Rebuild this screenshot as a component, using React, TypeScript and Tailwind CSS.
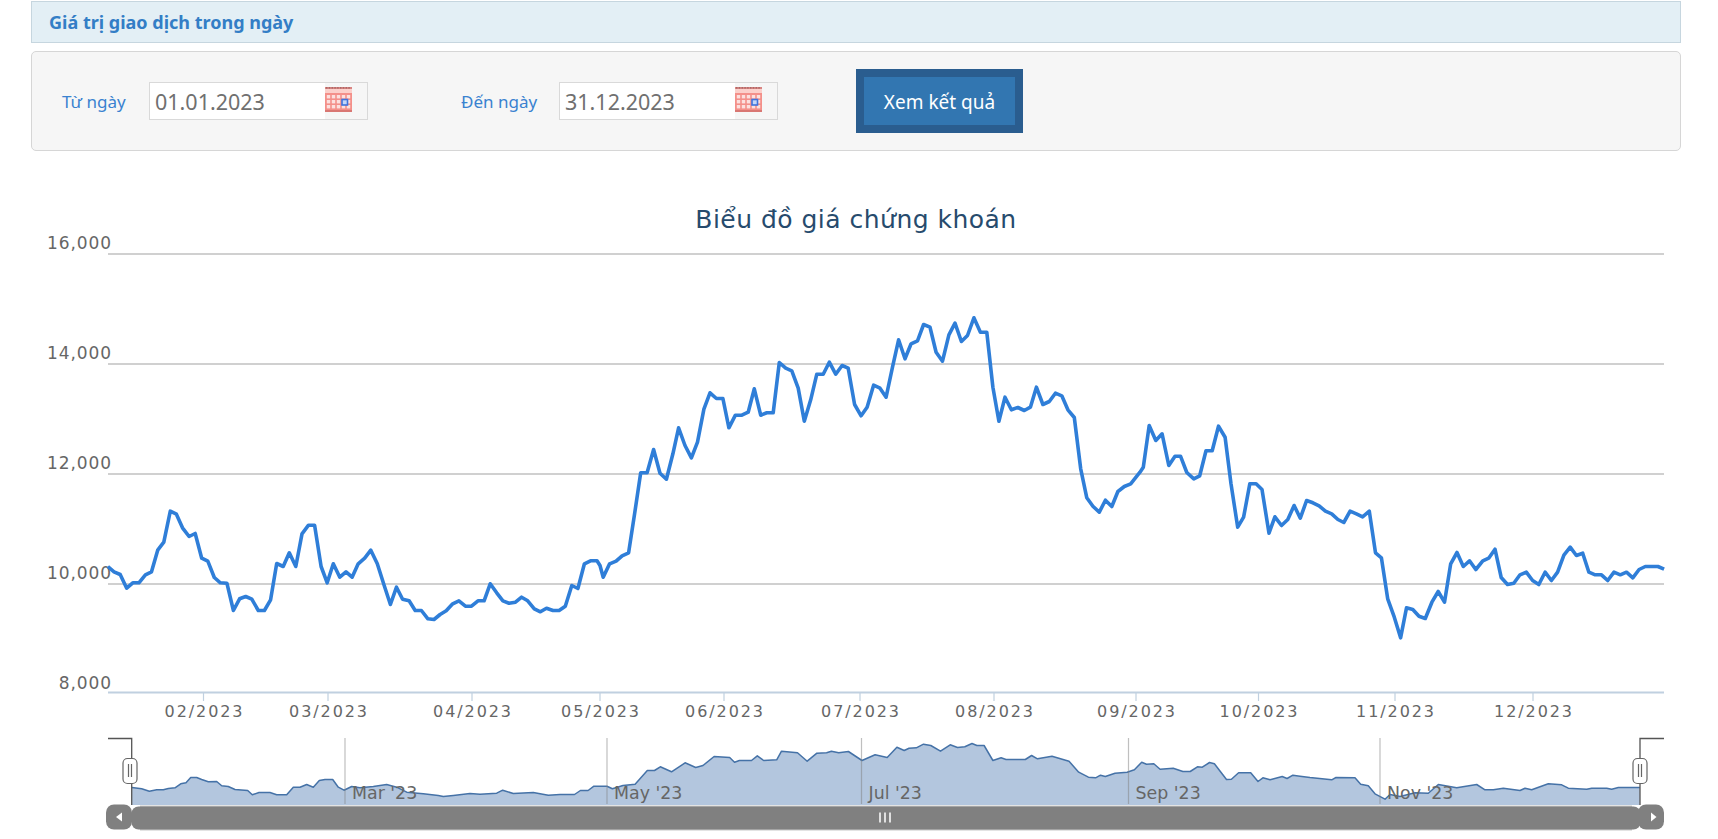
const mainA = [282,378,298,394,314,402,331,443,347,427,363,427,380,403,396,394,412,329,428,305,445,212,461,221,477,262,494,288,510,279,527,353,543,362,560,411,576,427,593,428,610,510,626,475,642,468,658,476,675,510,691,510,707,478,723,369,740,378,756,337,773,378,789,280,806,254,822,254,839,378,855,427,871,370,888,410,904,394,920,410,936,370,953,353,969,329,986,370,1004,435,1020,492,1036,440,1052,476,1069,481,1085,510,1101,510,1118,535,1134,537,1150,522,1166,511,1183,490,1199,481,1216,497,1232,497,1249,481,1265,481,1281,430,1298,457,1314,481,1330,488,1347,485,1363,470,1379,481,1396,505,1412,514,1428,503,1445,510,1461,510,1477,497,1494,435,1510,444,1527,370,1543,361,1560,361];
const mainB = [0,855,9,890,27,850,45,842,62,826,80,817,97,700,114,577,132,577,150,507,168,578,186,596,204,520,220,442,238,495,256,532,273,485,291,386,308,337,326,354,344,354,361,442,379,404,397,404,415,395,432,325,450,404,467,397,485,397,502,246,520,263,537,271,555,323,572,422,590,358,607,281,625,281,642,245,660,281,678,255,695,263,713,372,731,406,748,380,766,314,784,323,801,350,819,260,836,178,854,235,871,190,889,181,906,132,924,140,941,215,959,242,977,163,994,128,1012,183,1029,165,1047,112,1065,155,1083,155,1100,320,1117,422,1134,350,1152,388,1170,381,1188,390,1205,380,1222,320,1240,372,1258,363,1275,338,1293,346,1310,388,1328,411,1346,565,1363,652,1380,677,1398,695,1415,659,1433,678,1450,633,1468,618,1486,610,1503,587];
const mainC = [0,215,9,200,25,75,43,120,60,100,78,195,95,167,110,167,127,216,146,235,162,226,179,151,196,151,213,77,231,110,247,250,265,380,281,350,298,250,315,250,331,267,350,398,366,349,384,375,401,357,418,315,435,353,452,300,469,307,486,316,503,332,520,340,537,357,553,366,570,332,587,340,604,349,622,332,639,457,655,472,672,595,690,650,707,712,723,622,740,627,757,647,774,654,792,605,809,573,826,605,843,490,860,456,877,498,894,481,911,507,930,481,946,473,963,446,980,531,997,552,1014,548,1031,523,1048,515,1065,540,1082,552,1099,515,1116,540,1133,515,1150,464,1167,440,1184,465,1201,458,1218,515,1235,523,1252,523,1269,540,1286,515,1303,523,1320,515,1337,532,1354,507,1371,498,1388,498,1405,498,1422,506];
const navA = [216,321,245,325,268,332,290,328,310,328,325,324,345,322,362,310,378,307,392,291,410,291,425,297,445,304,470,303,485,316,505,318,525,327,563,330,577,343,597,336,630,336,650,343,680,343,700,320,720,320,740,312,760,320,778,300,795,297,818,297,835,320,852,329,875,318,900,322,940,318,980,312,1010,320,1040,335,1090,340,1135,345,1150,348,1180,345,1230,339,1260,341,1310,338,1328,329,1360,339,1420,336,1465,344,1500,342];
const navB = [0,222,30,222,42,210,58,210,70,197,97,197,108,205,130,195,155,191,180,150,195,150,207,139,230,154,258,127,280,141,295,135,318,108,350,111,360,125,370,120,395,120,407,106,420,120,447,118,457,92,490,97,510,122,530,98,550,97,560,92,575,97,595,93,623,120,650,103,675,111,695,80,710,90,720,83,735,82,750,71,765,75,785,92,805,73,820,81,835,79,850,69,860,75,875,75,893,120,910,112,920,117,960,117,973,105,985,115,1015,107,1050,122,1070,155,1090,170,1105,172,1115,164,1125,168,1145,158,1170,155,1185,148,1200,125,1210,131,1225,130,1238,146,1265,143,1285,153,1300,153,1315,139,1325,140,1340,126,1350,130,1375,177,1385,176,1400,157,1425,157,1440,183,1450,172,1465,178,1490,168,1500,174,1512,164];
const navC = [0,287,30,291,95,298,108,291,165,292,182,311,205,316,225,340,255,356,270,342,300,348,345,337,385,338,415,312,470,322,530,312,555,328,580,328,610,323,660,330,675,323,695,328,745,310,785,313,805,323,860,326,875,323,920,323,935,326,955,321,1020,321];

// points were read off zoomed crops, so each run has its own origin and scale
function toPoints(raw: number[], ox: number, sx: number, oy: number) {
  const out: string[] = [];
  for (let i = 0; i < raw.length; i += 2) {
    out.push(`${(ox + raw[i] / sx).toFixed(1)},${(oy + raw[i + 1] / 3).toFixed(1)}`);
  }
  return out;
}

const mainLine = [
  ...toPoints(mainA, 0, 2.613, 440.5),
  ...toPoints(mainB, 600, 2.8, 280.5),
  ...toPoints(mainC, 1140, 2.713, 400.5),
].join(" ");

const navLine = [
  ...toPoints(navA, 60, 3, 680.5),
  ...toPoints(navB, 560, 2.063, 720.5),
  ...toPoints(navC, 1300, 3, 680.5),
];

const chartFont = "'DejaVu Sans', 'Noto Sans', sans-serif";

const yLabels = [
  { text: "16,000", y: 249 },
  { text: "14,000", y: 359 },
  { text: "12,000", y: 469 },
  { text: "10,000", y: 579 },
  { text: "8,000", y: 689 },
];
const gridY = [253, 363, 473, 583];
const months = [
  { text: "02/2023", x: 203.5 },
  { text: "03/2023", x: 328 },
  { text: "04/2023", x: 472 },
  { text: "05/2023", x: 600 },
  { text: "06/2023", x: 724 },
  { text: "07/2023", x: 860 },
  { text: "08/2023", x: 994 },
  { text: "09/2023", x: 1136 },
  { text: "10/2023", x: 1258.5 },
  { text: "11/2023", x: 1395 },
  { text: "12/2023", x: 1533 },
];
const navMarks = [
  { text: "Mar '23", x: 345 },
  { text: "May '23", x: 607 },
  { text: "Jul '23", x: 861.5 },
  { text: "Sep '23", x: 1128.5 },
  { text: "Nov '23", x: 1380 },
];

function CalendarIcon() {
  const cells = [];
  for (let r = 0; r < 3; r++) {
    for (let c = 0; c < 5; c++) {
      cells.push(<rect key={`${r}-${c}`} x={1.8 + c * 5} y={8 + r * 5} width="3.4" height="3.4" fill="#fff" opacity="0.72" />);
    }
  }
  return (
    <svg width="27" height="25" viewBox="0 0 27 25" className="mb-[3px] shrink-0">
      <rect width="27" height="25" fill="#f4908a" />
      <rect y="0" width="27" height="2" fill="#d98582" />
      <path d="M1 0.8h25" stroke="#9a5f5f" strokeWidth="1.2" strokeDasharray="1.4 1.4" />
      <rect y="2" width="27" height="4" fill="#fbd0cb" />
      {cells}
      <rect y="23" width="27" height="2" fill="#d97773" />
      <rect x="17" y="12.5" width="5.5" height="5.5" fill="#c4d6f8" stroke="#3f73dc" strokeWidth="1.6" />
    </svg>
  );
}

function DateField({ value }: { value: string }) {
  return (
    <div className="flex h-[38px] w-[219px] items-center border border-[#d9d9d9]">
      <div className="flex h-full w-[175px] items-center bg-white pl-[5px] pt-[2px] font-['Noto_Sans',sans-serif] text-[21.5px] text-[#707070]">
        {value}
      </div>
      <CalendarIcon />
    </div>
  );
}

function Handle({ x }: { x: number }) {
  return (
    <g>
      <rect x={x - 7} y="758.5" width="14" height="25" rx="4.5" fill="#fff" stroke="#666" strokeWidth="1.2" />
      <path d={`M${x - 1.5} 764v13M${x + 1.5} 764v13`} stroke="#666" strokeWidth="1.2" />
    </g>
  );
}

function Chart() {
  return (
    <svg width="1718" height="660" viewBox="0 180 1718 660" className="block">
      <text x="856" y="228" textAnchor="middle" fontFamily={chartFont} fontSize="25" letterSpacing="0.48" fill="#274b6d">
        Biểu đồ giá chứng khoán
      </text>

      {yLabels.map((l) => (
        <text key={l.text} x="112" y={l.y} textAnchor="end" fontFamily={chartFont} fontSize="17" letterSpacing="0.9" fill="#666">
          {l.text}
        </text>
      ))}
      {gridY.map((y) => (
        <line key={y} x1="108" x2="1664" y1={y + 1} y2={y + 1} stroke="#c0c0c0" strokeWidth="1.5" />
      ))}
      <line x1="108" x2="1664" y1="692.5" y2="692.5" stroke="#c0d0e0" strokeWidth="2" />
      {months.map((m) => (
        <g key={m.text}>
          <line x1={m.x} x2={m.x} y1="692" y2="701" stroke="#c0d0e0" strokeWidth="1.2" />
          <text x={m.x + 1} y="717" textAnchor="middle" fontFamily={chartFont} fontSize="16" letterSpacing="1.9" fill="#666">
            {m.text}
          </text>
        </g>
      ))}
      <polyline points={mainLine} fill="none" stroke="#2f7ed8" strokeWidth="3.6" strokeLinejoin="round" />

      {/* navigator */}
      <polygon points={`131.7,805 ${navLine.join(" ")} 1640,805`} fill="#b3c6de" />
      <polyline points={navLine.join(" ")} fill="none" stroke="#4572a7" strokeWidth="1.5" strokeLinejoin="round" />
      {navMarks.map((m) => (
        <g key={m.text}>
          <line x1={m.x} x2={m.x} y1="738" y2="804" stroke="#7f7f7f" strokeOpacity="0.5" strokeWidth="1.2" />
          <text x={m.x + 7} y="799" fontFamily={chartFont} fontSize="17.4" fill="#666">
            {m.text}
          </text>
        </g>
      ))}
      <polyline points="108,738.5 131.7,738.5 131.7,805" fill="none" stroke="#555" strokeWidth="1.3" />
      <polyline points="1664,738.5 1640,738.5 1640,805" fill="none" stroke="#555" strokeWidth="1.3" />
      <Handle x={130} />
      <Handle x={1640} />

      {/* scrollbar */}
      <rect x="140" y="805.5" width="1492" height="25" fill="#c8c8c8" />
      <rect x="106" y="804.5" width="26" height="25" rx="8" fill="#808080" />
      <rect x="1638" y="804.5" width="26" height="25" rx="8" fill="#808080" />
      <rect x="131.5" y="806.5" width="1509" height="23" rx="7" fill="#808080" />
      <polygon points="122,812.5 122,821.5 116,817" fill="#fff" />
      <polygon points="1651,812.5 1651,821.5 1656.5,817" fill="#fff" />
      <path d="M880 812.5v10M885 812.5v10M890 812.5v10" stroke="#fff" strokeWidth="1.5" />
    </svg>
  );
}

export default function App() {
  return (
    <div className="h-[839px] overflow-hidden bg-white">
      <div className="pl-[31px] pr-[37px] pt-px">
        <div className="flex h-[42px] items-center border border-[#c6d6df] bg-[#e3eff5] pl-[17px] font-['Noto_Sans',sans-serif] text-[18px] font-bold text-[#337ec6]">
          Giá trị giao dịch trong ngày
        </div>
        <div className="mt-2 flex h-[100px] items-center rounded-[5px] border border-[#d6d6d6] bg-[#f6f6f6] pl-[30px] font-['Noto_Sans',sans-serif] text-[#3a82d0]">
          <span className="w-[87px] pt-[2px] text-[17px]">Từ ngày</span>
          <DateField value="01.01.2023" />
          <span className="ml-[93px] w-[98px] pt-[2px] text-[17px]">Đến ngày</span>
          <DateField value="31.12.2023" />
          <button className="ml-[78px] h-[64px] w-[167px] border-[8px] border-[#2a5d8f] bg-[#3276b1] pt-[2px] text-[19px] text-white">
            Xem kết quả
          </button>
        </div>
      </div>
      <div className="mt-[29px]">
        <Chart />
      </div>
    </div>
  );
}
